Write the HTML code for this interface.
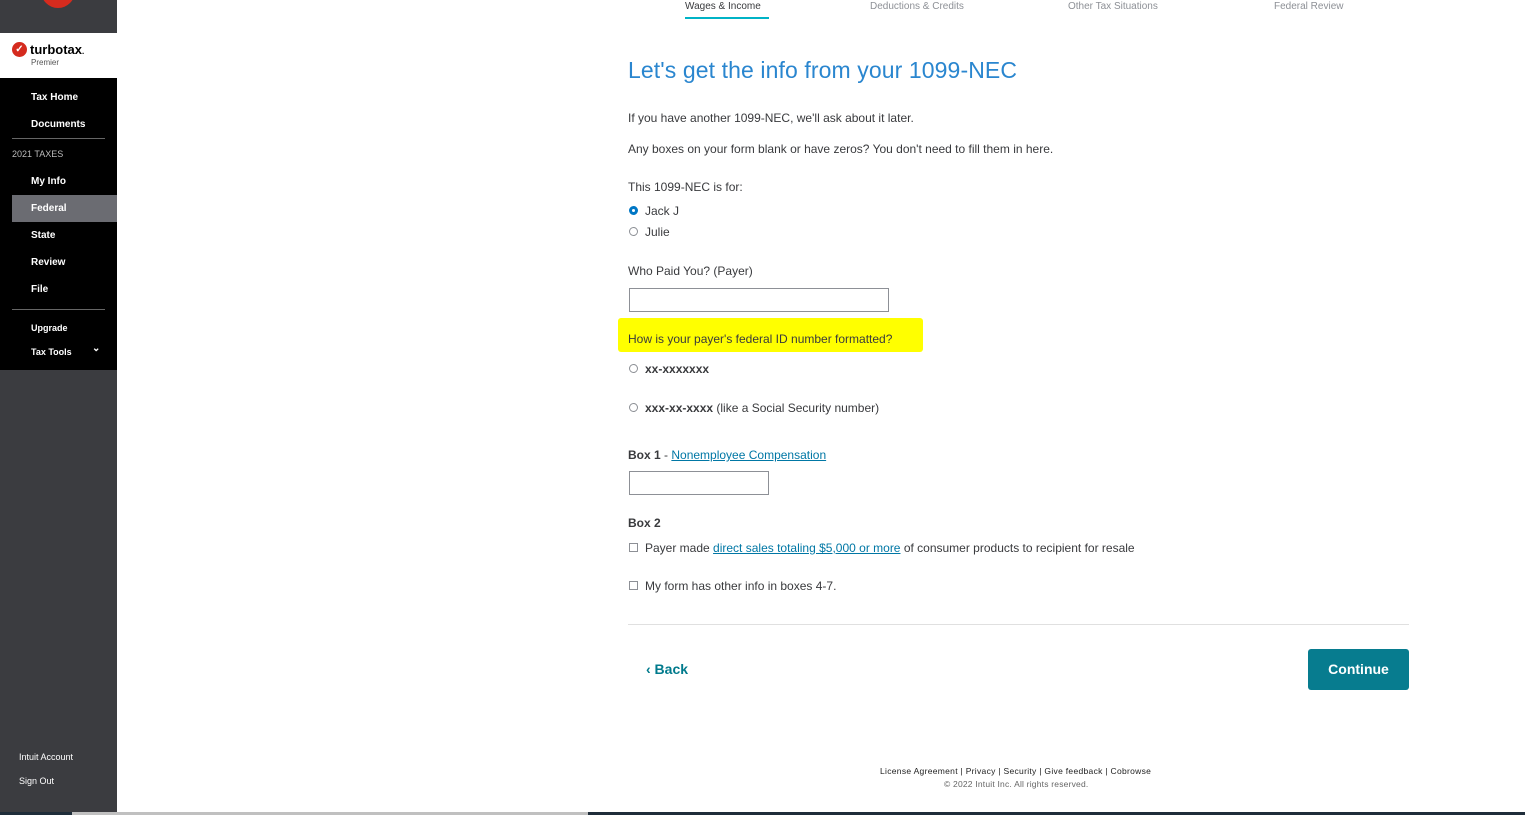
<!DOCTYPE html>
<html><head><meta charset="utf-8"><style>
*{margin:0;padding:0;box-sizing:border-box}
body{width:1525px;height:815px;position:relative;background:#fff;font-family:"Liberation Sans",sans-serif;color:#393a3d;overflow:hidden}
.a{position:absolute;white-space:nowrap}
.side{position:absolute;left:0;top:0;width:117px;height:812px;background:#3b3c40}
.nav{position:absolute;left:0;top:78px;width:117px;height:292px;background:#000}
.n{position:absolute;left:31px;color:#fff;font-size:10px;font-weight:bold}
.t{font-size:12px}
.radio{position:absolute;width:9px;height:9px;border:1px solid #8d9096;border-radius:50%;background:#fff}
.cb{position:absolute;width:9px;height:9px;border:1px solid #8d9096;background:#fff}
a{color:#0077a5;text-decoration:underline}
</style></head><body>
<div class="side"></div>
<div class="a" style="left:41px;top:-14px;width:34px;height:22px;background:#d52b1e;border-radius:0 0 17px 17px"></div>
<div class="a" style="left:0;top:33px;width:117px;height:45px;background:#fff"></div>
<div class="a" style="left:12px;top:42px;width:15px;height:15px;border-radius:50%;background:#d52b1e;color:#fff;font-size:10px;line-height:15px;text-align:center;font-weight:bold">✓</div>
<div class="a" style="left:30px;top:42px;font-size:13px;font-weight:bold;color:#000">turbotax<span style="font-size:8px">.</span></div>
<div class="a" style="left:31px;top:58px;font-size:8px;color:#555">Premier</div>
<div class="nav"></div>
<div class="n" style="top:92px">Tax Home</div>
<div class="n" style="top:119px">Documents</div>
<div class="a" style="left:12px;top:138px;width:93px;height:1px;background:#666"></div>
<div class="a" style="left:12px;top:149px;font-size:9px;color:#bbb">2021 TAXES</div>
<div class="n" style="top:176px">My Info</div>
<div class="a" style="left:12px;top:195px;width:105px;height:27px;background:#6b6c72"></div>
<div class="n" style="top:203px">Federal</div>
<div class="n" style="top:230px">State</div>
<div class="n" style="top:257px">Review</div>
<div class="n" style="top:284px">File</div>
<div class="a" style="left:12px;top:309px;width:93px;height:1px;background:#666"></div>
<div class="n" style="top:323px;font-size:9px">Upgrade</div>
<div class="n" style="top:347px;font-size:9px">Tax Tools</div>
<div class="a" style="left:92px;top:343px;color:#fff;font-size:10px;font-weight:bold">⌄</div>
<div class="a" style="left:19px;top:752px;color:#fff;font-size:9px">Intuit Account</div>
<div class="a" style="left:19px;top:776px;color:#fff;font-size:9px">Sign Out</div>
<div class="a" style="left:0;top:812px;width:1525px;height:3px;background:#1f2d3a"></div>
<div class="a" style="left:72px;top:812px;width:516px;height:3px;background:#c0c0c0"></div>

<div class="a" style="left:685px;top:1px;font-size:10px;color:#393a3d">Wages &amp; Income</div>
<div class="a" style="left:685px;top:17px;width:84px;height:2px;background:#00b3c6"></div>
<div class="a" style="left:870px;top:1px;font-size:10px;color:#8d9096">Deductions &amp; Credits</div>
<div class="a" style="left:1068px;top:1px;font-size:10px;color:#8d9096">Other Tax Situations</div>
<div class="a" style="left:1274px;top:1px;font-size:10px;color:#8d9096">Federal Review</div>

<div class="a" style="left:628px;top:57px;font-size:23px;color:#2a86cf;letter-spacing:0.1px">Let's get the info from your 1099-NEC</div>
<div class="a t" style="left:628px;top:111px">If you have another 1099-NEC, we'll ask about it later.</div>
<div class="a t" style="left:628px;top:142px">Any boxes on your form blank or have zeros? You don't need to fill them in here.</div>
<div class="a t" style="left:628px;top:180px">This 1099-NEC is for:</div>
<div class="radio" style="left:629px;top:206px;border:3px solid #0077c5"></div>
<div class="a t" style="left:645px;top:204px">Jack J</div>
<div class="radio" style="left:629px;top:227px"></div>
<div class="a t" style="left:645px;top:225px">Julie</div>
<div class="a t" style="left:628px;top:264px">Who Paid You? (Payer)</div>
<div class="a" style="left:629px;top:288px;width:260px;height:24px;border:1px solid #8d9096"></div>
<div class="a" style="left:618px;top:318px;width:305px;height:34px;background:#ffff00;border-radius:3px"></div>
<div class="a t" style="left:628px;top:332px">How is your payer's federal ID number formatted?</div>
<div class="radio" style="left:629px;top:364px"></div>
<div class="a t" style="left:645px;top:362px;font-weight:bold">xx-xxxxxxx</div>
<div class="radio" style="left:629px;top:403px"></div>
<div class="a t" style="left:645px;top:401px"><b>xxx-xx-xxxx</b> (like a Social Security number)</div>
<div class="a t" style="left:628px;top:448px"><b>Box 1</b> - <a>Nonemployee Compensation</a></div>
<div class="a" style="left:629px;top:471px;width:140px;height:24px;border:1px solid #8d9096"></div>
<div class="a t" style="left:628px;top:516px;font-weight:bold">Box 2</div>
<div class="cb" style="left:629px;top:543px"></div>
<div class="a t" style="left:645px;top:541px">Payer made <a>direct sales totaling $5,000 or more</a> of consumer products to recipient for resale</div>
<div class="cb" style="left:629px;top:581px"></div>
<div class="a t" style="left:645px;top:579px">My form has other info in boxes 4-7.</div>
<div class="a" style="left:628px;top:624px;width:781px;height:1px;background:#e0e0e0"></div>
<div class="a" style="left:646px;top:661px;font-size:14px;font-weight:bold;color:#007a8c">‹ Back</div>
<div class="a" style="left:1308px;top:649px;width:101px;height:41px;background:#077c8f;border-radius:3px;color:#fff;font-size:14px;font-weight:bold;text-align:center;line-height:41px">Continue</div>
<div class="a" style="left:880px;top:766px;font-size:8.5px;color:#222;letter-spacing:0.3px">License Agreement | Privacy | Security | Give feedback | Cobrowse</div>
<div class="a" style="left:944px;top:779px;font-size:8.5px;color:#666;letter-spacing:0.2px">© 2022 Intuit Inc. All rights reserved.</div>
</body></html>
